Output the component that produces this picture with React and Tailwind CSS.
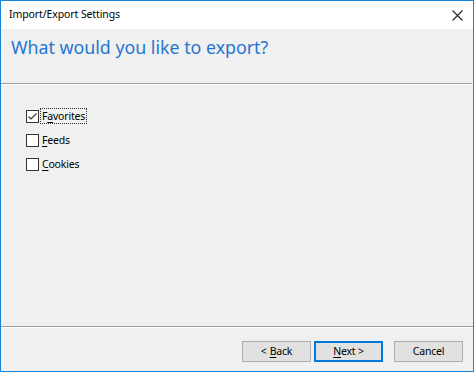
import React from 'react'

const font = { fontFamily: '"Segoe UI", "Noto Sans", "Liberation Sans", sans-serif' }

function Box({ checked }) {
  return (
    <span className="w-[13px] h-[13px] border border-[#333333] bg-white flex items-center justify-center shrink-0">
      {checked && (
        <svg width="11" height="11" viewBox="0 0 11 11">
          <path d="M1.5 5.5 L4 8 L9.5 2.5" fill="none" stroke="#333333" strokeWidth="1.1" />
        </svg>
      )}
    </span>
  )
}

function Option({ label, accel, checked, focused }) {
  const i = label.indexOf(accel)
  return (
    <div className="flex items-center gap-[2px] h-[16px]">
      <Box checked={checked} />
      <span
        className={`text-[10.5px] leading-[14px] tracking-[-0.2px] text-black px-[1px] ${
          focused ? 'outline outline-1 outline-dotted outline-[#333]' : ''
        }`}
      >
        {label.slice(0, i)}
        <span className="underline underline-offset-2">{accel}</span>
        {label.slice(i + 1)}
      </span>
    </div>
  )
}

function Btn({ children, primary }) {
  return (
    <button
      type="button"
      className={`w-[69px] h-[21px] bg-[#e1e1e1] text-[10.5px] tracking-[-0.2px] text-black flex items-center justify-center border ${
        primary ? 'border-[#0078d7] shadow-[inset_0_0_0_1px_#0078d7]' : 'border-[#adadad]'
      }`}
    >
      {children}
    </button>
  )
}

export default function App() {
  return (
    <div style={font} className="w-[474px] h-[372px] border border-[#1883d7] bg-[#f0f0f0] flex flex-col">
      <div className="h-[28px] bg-white flex items-center justify-between pl-[8px] pr-[10px] shrink-0">
        <span className="text-[10.5px] tracking-[-0.1px] text-black">Import/Export Settings</span>
        <svg width="11" height="11" viewBox="0 0 11 11">
          <path d="M0.5 0.5 L10.5 10.5 M10.5 0.5 L0.5 10.5" stroke="#222" strokeWidth="1.1" />
        </svg>
      </div>
      <div className="h-[54px] shrink-0 pl-[10px] pt-[6px]">
        <h1 className="text-[17.8px] text-[#1f76d2] leading-[24px]">What would you like to export?</h1>
      </div>
      <div className="h-[2px] shrink-0 border-t border-[#a0a0a0] border-b border-b-white mr-[1px]" />
      <div className="flex-1 pl-[25px] pt-[23px] flex flex-col gap-[8px]">
        <Option label="Favorites" accel="a" checked focused />
        <Option label="Feeds" accel="F" />
        <Option label="Cookies" accel="C" />
      </div>
      <div className="h-[2px] shrink-0 border-t border-[#a0a0a0] border-b border-b-white" />
      <div className="h-[43px] shrink-0 flex items-start justify-end pr-[10px] pt-[13px]">
        <div className="flex gap-[3px]">
          <Btn>
            &lt; <span className="underline underline-offset-2 ml-[3px]">B</span>ack
          </Btn>
          <Btn primary>
            <span className="underline underline-offset-2">N</span>ext &gt;
          </Btn>
        </div>
        <div className="ml-[11px]">
          <Btn>Cancel</Btn>
        </div>
      </div>
    </div>
  )
}
